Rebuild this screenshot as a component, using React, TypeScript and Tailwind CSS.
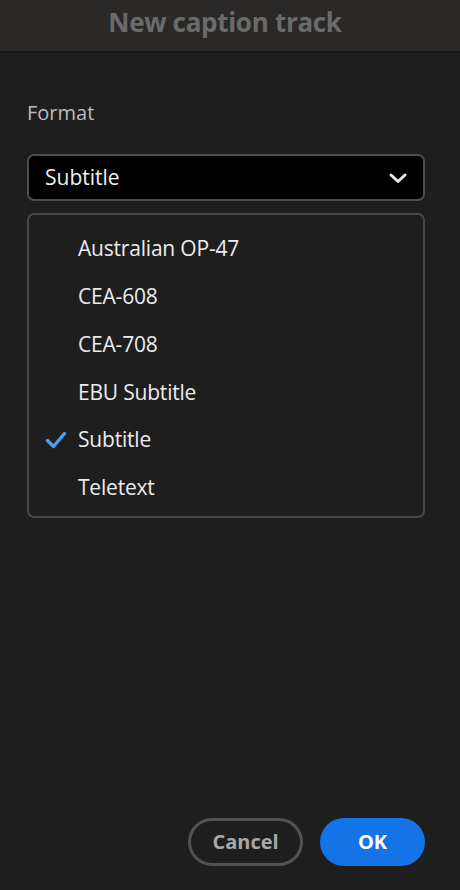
import React, { useState } from 'react';

const formats = ['Australian OP-47', 'CEA-608', 'CEA-708', 'EBU Subtitle', 'Subtitle', 'Teletext'];

const font = { fontFamily: '"Open Sans", "Noto Sans", sans-serif' };

export default function App() {
  const [selected, setSelected] = useState('Subtitle');

  return (
    <div className="w-[460px] h-[890px] flex flex-col bg-[#1e1e1e] overflow-hidden" style={font}>
      {/* Title bar */}
      <div className="h-[53px] shrink-0 flex items-center justify-center bg-[#2b2928] border-b-2 border-[#141414] pr-[10px]">
        <span className="text-[26px] font-bold text-[#6b6b6b] tracking-[-0.3px] pb-[6px]">New caption track</span>
      </div>

      <div className="flex-1 flex flex-col pl-[27px] pr-[35px]">
        <div className="mt-[50px] text-[20px] text-[#bcbcbc] leading-none">Format</div>

        {/* Select */}
        <div className="mt-[31px] h-[47px] flex items-center justify-between bg-black border-2 border-[#4e4e4e] rounded-[7px] pl-[16px] pr-[15px]">
          <span className="text-[21px] text-[#f0f0f0]">{selected}</span>
          <svg width="20" height="14" viewBox="0 0 20 14" fill="none">
            <path d="M3 4l7 6.5L17 4" stroke="#e8e8e8" strokeWidth="3" strokeLinecap="round" strokeLinejoin="round" />
          </svg>
        </div>

        {/* Menu */}
        <div className="mt-[12px] border-2 border-[#474747] rounded-[7px] bg-[#1e1e1e] pt-[10px] pb-[4px]">
          {formats.map((f) => (
            <div
              key={f}
              className="h-[47.8px] flex items-center cursor-pointer"
              onClick={() => setSelected(f)}
            >
              <div className="w-[49px] flex justify-end pr-[10px]">
                {selected === f && (
                  <svg width="24" height="20" viewBox="0 0 24 20" fill="none">
                    <path d="M3.5 10.5l6 6L20.5 3.5" stroke="#4b9ef0" strokeWidth="3.4" strokeLinecap="round" strokeLinejoin="round" />
                  </svg>
                )}
              </div>
              <span className="text-[21px] text-[#ececec] tracking-[-0.2px]">{f}</span>
            </div>
          ))}
        </div>

        {/* Buttons */}
        <div className="mt-auto mb-[24px] flex justify-end gap-[17px]">
          <button className="h-[48px] w-[115px] rounded-full border-[3px] border-[#525252] text-[20px] font-bold text-[#a8a8a8]">
            Cancel
          </button>
          <button className="h-[48px] w-[105px] rounded-full bg-[#1473e6] text-[20px] font-bold text-white">
            OK
          </button>
        </div>
      </div>
    </div>
  );
}
